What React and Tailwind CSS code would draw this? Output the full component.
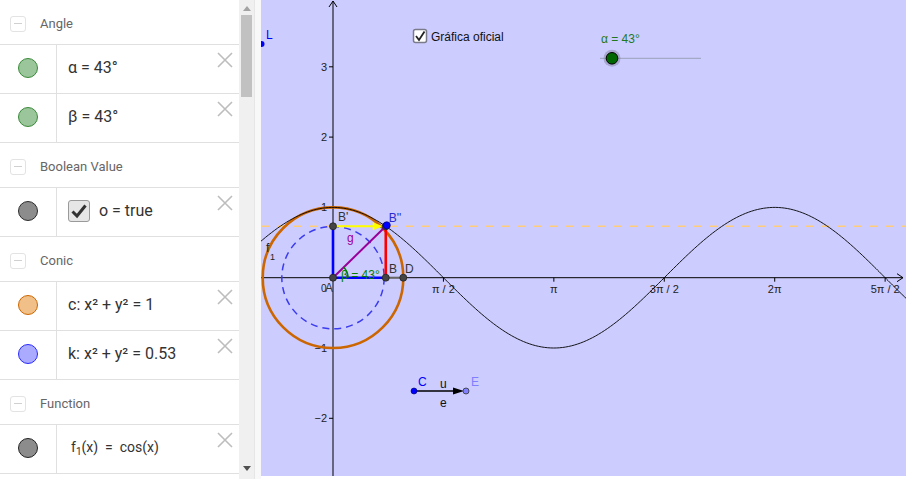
import React from "react";

const OX = 333;
const OY = 277.7;
const S = 70.3;

function CloseX() {
  return (
    <svg width="16" height="16" viewBox="0 0 16 16" className="absolute right-[6px] top-[7px]">
      <path d="M1 1 L15 15 M15 1 L1 15" stroke="#bdbdbd" strokeWidth="1.6" fill="none" />
    </svg>
  );
}

function Header({ title }) {
  return (
    <div className="h-[45px] border-b border-[#e0e0e0] flex items-center pt-[3px] pl-[10px]">
      <div className="w-[16px] h-[16px] rounded-[3px] border border-[#e3e3e3] flex items-center justify-center">
        <div className="w-[8px] h-[1.5px] bg-[#d0d0d0]" />
      </div>
      <span className="ml-[14px] text-[13px] text-[#666666]" style={{ fontFamily: "Roboto, 'Noto Sans', sans-serif" }}>
        {title}
      </span>
    </div>
  );
}

function Item({ fill, stroke, children }) {
  return (
    <div className="relative h-[49px] border-b border-[#e0e0e0] flex">
      <div className="w-[57px] border-r border-[#e0e0e0] flex items-center justify-center pb-[3px]">
        <div
          className="w-[20px] h-[20px] rounded-full border-[1.5px]"
          style={{ backgroundColor: fill, borderColor: stroke }}
        />
      </div>
      <div
        className="flex-1 flex items-center pl-[11px] pb-[3px] text-[16px] text-[#333333] whitespace-pre"
        style={{ fontFamily: "Roboto, 'Noto Sans', sans-serif" }}
      >
        {children}
      </div>
      <CloseX />
    </div>
  );
}

function Graphics() {
  const pts = [];
  for (let px = 261; px <= 906; px += 1.5) {
    const x = (px - OX) / S;
    const y = OY - S * Math.cos(x);
    pts.push(`${px.toFixed(1)},${y.toFixed(2)}`);
  }
  const cosPath = "M" + pts.join(" L");
  const alpha = (43 * Math.PI) / 180;
  const bx = OX + alpha * S;
  const by = OY - Math.cos(alpha) * S;
  const rk = Math.sqrt(0.53) * S;
  const arcR = 15;
  const arcEnd = Math.atan2(OY - by, bx - OX);
  const ax2 = OX + arcR * Math.cos(arcEnd);
  const ay2 = OY - arcR * Math.sin(arcEnd);
  const font = "'Liberation Sans', Arial, sans-serif";
  const xTicks = [
    [OX + S * Math.PI / 2, "π / 2"],
    [OX + S * Math.PI, "π"],
    [OX + S * 1.5 * Math.PI, "3π / 2"],
    [OX + S * 2 * Math.PI, "2π"],
    [OX + S * 2.5 * Math.PI, "5π / 2"],
  ];
  const yTicks = [3, 2, 1, -1, -2];
  return (
    <svg width="645" height="476" viewBox="261 0 645 476" className="block" style={{ fontFamily: font }}>
      <rect x="261" y="0" width="645" height="476" fill="#ccccff" />
      <line x1="261" y1={by} x2="906" y2={by} stroke="#ffcc77" strokeWidth="1.5" strokeDasharray="8 8" />
      <line x1="261" y1={OY} x2="903" y2={OY} stroke="#000" strokeWidth="1" />
      <path d={`M897 ${OY - 4} L903 ${OY} L897 ${OY + 4}`} stroke="#000" fill="none" strokeWidth="1" />
      <line x1={OX} y1="1" x2={OX} y2="476" stroke="#000" strokeWidth="1" />
      <path d={`M${OX - 4} 7 L${OX} 1 L${OX + 4} 7`} stroke="#000" fill="none" strokeWidth="1" />
      {xTicks.map(([x, l]) => (
        <g key={l}>
          <line x1={x} y1={OY} x2={x} y2={OY + 4} stroke="#000" strokeWidth="1" />
          <text x={x} y={OY + 15} fontSize="11" fill="#222" textAnchor="middle">{l}</text>
        </g>
      ))}
      {yTicks.map((v) => (
        <g key={v}>
          <line x1={OX - 4} y1={OY - v * S} x2={OX} y2={OY - v * S} stroke="#000" strokeWidth="1" />
          <text x={OX - 6} y={OY - v * S + 4} fontSize="11" fill="#222" textAnchor="end">
            {v < 0 ? "−" + -v : v}
          </text>
        </g>
      ))}
      <text x={OX - 12} y={OY + 14} fontSize="10" fill="#222">0</text>
      <circle cx={OX} cy={OY} r={rk} fill="none" stroke="#3b3bf0" strokeWidth="1.5" strokeDasharray="7 5" />
      <circle cx={OX} cy={OY} r={S} fill="none" stroke="#cc6600" strokeWidth="2.6" />
      <path d={cosPath} fill="none" stroke="#000" strokeWidth="0.9" />
      <line x1={OX} y1={OY} x2={OX} y2={by} stroke="#0000ff" strokeWidth="2.6" />
      <line x1={OX} y1={OY} x2={bx} y2={OY} stroke="#0000ff" strokeWidth="2.6" />
      <line x1={bx} y1={OY} x2={OX + S} y2={OY} stroke="#666666" strokeWidth="2" />
      <line x1={bx} y1={OY} x2={bx} y2={by} stroke="#ff0000" strokeWidth="2.6" />
      <line x1={OX} y1={OY} x2={bx} y2={by} stroke="#990099" strokeWidth="2" />
      <line x1={OX} y1={by} x2={bx - 10} y2={by} stroke="#ffff00" strokeWidth="2" />
      <path d={`M${bx - 13} ${by - 4} L${bx - 3} ${by} L${bx - 13} ${by + 4} Z`} fill="#ffff00" />
      <path d={`M${OX + arcR} ${OY} A${arcR} ${arcR} 0 0 0 ${ax2} ${ay2}`} fill="none" stroke="#007f00" strokeWidth="1.5" />
      {[[OX, OY], [OX, by], [bx, OY], [OX + S, OY], [bx, by]].map(([x, y], i) => (
        <circle key={i} cx={x} cy={y} r="3.5" fill="#444444" stroke="#222" strokeWidth="0.8" />
      ))}
      <circle cx={bx + 1} cy={by - 1} r="3.6" fill="#0000ff" stroke="#000066" strokeWidth="0.6" />
      <text x="338" y={by - 5} fontSize="12" fill="#333">B'</text>
      <text x={bx + 3} y={by - 4} fontSize="12" fill="#2a2ad0">B''</text>
      <text x="347" y="242" fontSize="12" fill="#990099">g</text>
      <text x="389" y="273" fontSize="12" fill="#333">B</text>
      <text x="405" y="273" fontSize="12" fill="#333">D</text>
      <text x="325" y={OY + 14} fontSize="12" fill="#333">A</text>
      <text x="341" y="279" fontSize="12" fill="#007f00">β = 43°</text>
      <text x="266" y="252" fontSize="12" fill="#222">f</text>
      <text x="270" y="260" fontSize="9" fill="#222">1</text>
      <circle cx="261.5" cy="44" r="3" fill="#0000ff" />
      <text x="266" y="39" fontSize="12" fill="#0000ff">L</text>
      <rect x="413.5" y="29.5" width="13" height="13" rx="2" fill="#ffffff" stroke="#7a7a8a" strokeWidth="1.5" />
      <path d="M416 36 L419 40 L424.5 31.5" fill="none" stroke="#222" strokeWidth="1.8" />
      <text x="431" y="40.5" fontSize="12" fill="#111">Gráfica oficial</text>
      <text x="601" y="43" fontSize="12" fill="#1f7a1f">α = 43°</text>
      <line x1="600" y1="58.3" x2="701" y2="58.3" stroke="#9aa0b8" strokeWidth="1" />
      <circle cx="612" cy="58.3" r="8.5" fill="#8888a8" fillOpacity="0.55" />
      <circle cx="612" cy="58.3" r="5.8" fill="#006600" stroke="#000" strokeWidth="1" />
      <line x1="414" y1="391" x2="456" y2="391" stroke="#000" strokeWidth="1.3" />
      <path d="M453 387.5 L464 391 L453 394.5 Z" fill="#000" />
      <circle cx="414" cy="391" r="3" fill="#0000ff" stroke="#000066" strokeWidth="0.6" />
      <circle cx="466" cy="391" r="3" fill="#7f7fff" stroke="#333" strokeWidth="0.8" />
      <text x="418" y="386" fontSize="12" fill="#0000ff">C</text>
      <text x="471" y="386" fontSize="12" fill="#7f7fff">E</text>
      <text x="440" y="388" fontSize="12" fill="#111">u</text>
      <text x="440" y="407" fontSize="12" fill="#111">e</text>
    </svg>
  );
}

export default function App() {
  return (
    <div className="w-[906px] h-[479px] bg-white flex overflow-hidden">
      <div className="w-[239px] flex flex-col">
        <Header title="Angle" />
        <Item fill="#9bc59b" stroke="#3a8a3a">α = 43°</Item>
        <Item fill="#9bc59b" stroke="#3a8a3a">β = 43°</Item>
        <Header title="Boolean Value" />
        <Item fill="#8c8c8c" stroke="#2c2c2c">
          <div className="w-[22px] h-[22px] rounded-[3px] border border-[#9a9a9a] bg-[#e6e6e6] flex items-center justify-center mr-[9px]">
            <svg width="18" height="18" viewBox="0 0 18 18">
              <path d="M2.5 9.5 L7 14 L15.5 3.5" fill="none" stroke="#333" strokeWidth="3" strokeLinejoin="miter" />
            </svg>
          </div>
          o = true
        </Item>
        <Header title="Conic" />
        <Item fill="#f0c088" stroke="#cc6600">c: x² + y² = 1</Item>
        <Item fill="#aaaaff" stroke="#2a2aff">k: x² + y² = 0.53</Item>
        <Header title="Function" />
        <Item fill="#8c8c8c" stroke="#222222">
          <span className="text-[14px] pl-[3px]">
            f<sub className="text-[10px]">1</sub>(x)  =  cos(x)
          </span>
        </Item>
      </div>
      <div className="w-[15px] bg-[#f0f0f0] relative">
        <div className="absolute left-[4px] top-[6px] w-0 h-0 border-l-[4px] border-r-[4px] border-b-[5px] border-l-transparent border-r-transparent border-b-[#a3a3a3]" />
        <div className="absolute left-[2px] top-[15px] w-[11px] h-[82px] bg-[#c1c1c1]" />
        <div className="absolute left-[4px] top-[466px] w-0 h-0 border-l-[4px] border-r-[4px] border-t-[5px] border-l-transparent border-r-transparent border-t-[#505050]" />
      </div>
      <div className="w-[7px] bg-[#f8f8f8] border-l border-[#e6e6e6]" />
      <div className="flex-1">
        <Graphics />
      </div>
    </div>
  );
}
